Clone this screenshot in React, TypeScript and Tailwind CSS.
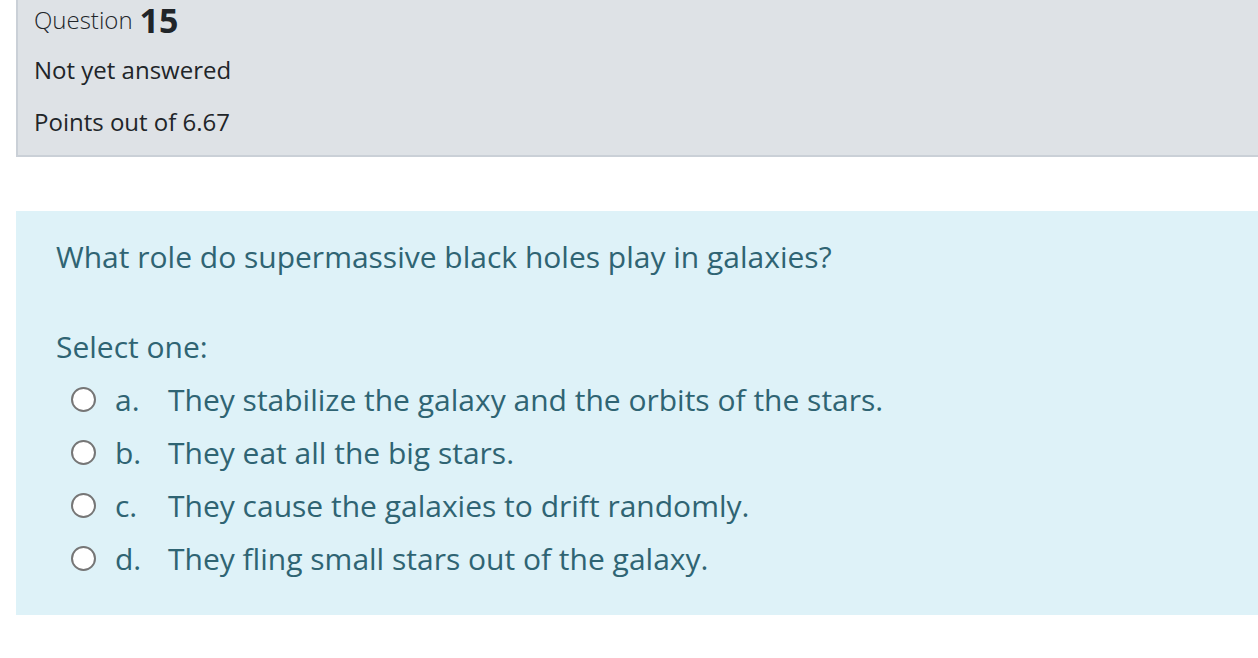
const options = [
  { letter: "a.", text: "They stabilize the galaxy and the orbits of the stars." },
  { letter: "b.", text: "They eat all the big stars." },
  { letter: "c.", text: "They cause the galaxies to drift randomly." },
  { letter: "d.", text: "They fling small stars out of the galaxy." },
];

export default function App() {
  return (
    <div className="w-[1258px] h-[658px] overflow-hidden bg-white font-['Open_Sans',sans-serif]">
      <div className="ml-4 w-[1300px] bg-[#dee2e6] border-l-2 border-b-2 border-[#cad0d7] pl-4 pb-[7px] text-[#212529]">
        <div className="h-[40px] flex items-center text-[24px]">
          <span className="font-light">Question</span>
          <span className="ml-[7px] text-[34px] font-bold leading-[40px]">15</span>
        </div>
        <div className="h-[54px] flex items-center text-[24px] pt-[5px]">Not yet answered</div>
        <div className="h-[54px] flex items-center text-[24px] pt-[2px]">Points out of 6.67</div>
      </div>

      <div className="ml-4 mt-[54px] w-[1300px] h-[404px] bg-[#def2f8] text-[#2f6473] pl-[40px] pt-[25px]">
        <div className="h-[40px] flex items-center text-[30px]">
          What role do supermassive black holes play in galaxies?
        </div>
        <div className="mt-[50px] h-[40px] flex items-center text-[30px]">Select one:</div>
        <div className="mt-[7px] flex flex-col">
          {options.map((o) => (
            <div key={o.letter} className="h-[53px] flex items-center pl-[15px] text-[30px]">
              <span className="w-[25px] h-[25px] rounded-full border-2 border-[#767676] bg-white" />
              <span className="ml-[19px] w-[53px]">{o.letter}</span>
              <span>{o.text}</span>
            </div>
          ))}
        </div>
      </div>
    </div>
  );
}
